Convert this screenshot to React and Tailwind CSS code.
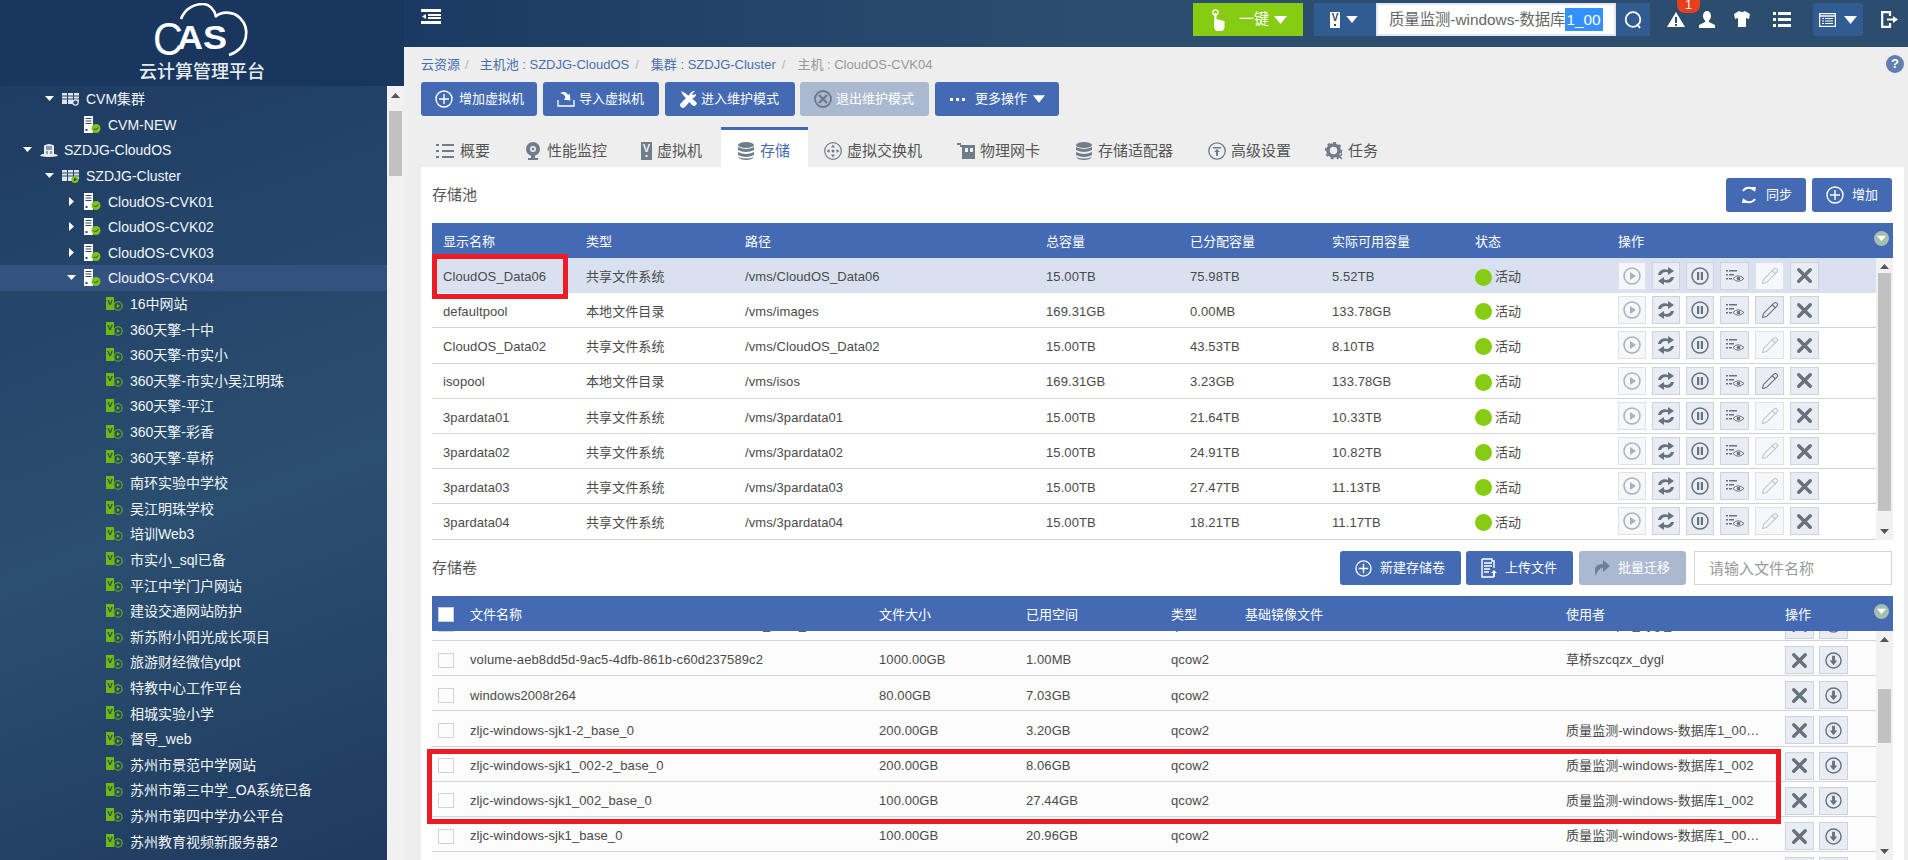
import { X, Pencil } from 'lucide-react';

const POOLS = [
  ['CloudOS_Data06', '共享文件系统', '/vms/CloudOS_Data06', '15.00TB', '75.98TB', '5.52TB', false],
  ['defaultpool', '本地文件目录', '/vms/images', '169.31GB', '0.00MB', '133.78GB', true],
  ['CloudOS_Data02', '共享文件系统', '/vms/CloudOS_Data02', '15.00TB', '43.53TB', '8.10TB', false],
  ['isopool', '本地文件目录', '/vms/isos', '169.31GB', '3.23GB', '133.78GB', true],
  ['3pardata01', '共享文件系统', '/vms/3pardata01', '15.00TB', '21.64TB', '10.33TB', false],
  ['3pardata02', '共享文件系统', '/vms/3pardata02', '15.00TB', '24.91TB', '10.82TB', false],
  ['3pardata03', '共享文件系统', '/vms/3pardata03', '15.00TB', '27.47TB', '11.13TB', false],
  ['3pardata04', '共享文件系统', '/vms/3pardata04', '15.00TB', '18.21TB', '11.17TB', false],
];

const LONG_USER = '质量监测-windows-数据库1_001,质量监测-windows-数据库1_002';
const VOLUMES = [
  ['volume-aeb8dd5d-9ac5-4dfb-861b-c60d237589c2_base_0', '1000.00GB', '1.00MB', 'qcow2', '草桥szcqzx_dygl_base'],
  ['volume-aeb8dd5d-9ac5-4dfb-861b-c60d237589c2', '1000.00GB', '1.00MB', 'qcow2', '草桥szcqzx_dygl'],
  ['windows2008r264', '80.00GB', '7.03GB', 'qcow2', ''],
  ['zljc-windows-sjk1-2_base_0', '200.00GB', '3.20GB', 'qcow2', LONG_USER],
  ['zljc-windows-sjk1_002-2_base_0', '200.00GB', '8.06GB', 'qcow2', '质量监测-windows-数据库1_002'],
  ['zljc-windows-sjk1_002_base_0', '100.00GB', '27.44GB', 'qcow2', '质量监测-windows-数据库1_002'],
  ['zljc-windows-sjk1_base_0', '100.00GB', '20.96GB', 'qcow2', LONG_USER],
  ['zljc-windows-sjk2_base_0', '100.00GB', '18.02GB', 'qcow2', LONG_USER],
];

const VMS = [
  '16中网站', '360天擎-十中', '360天擎-市实小', '360天擎-市实小吴江明珠', '360天擎-平江', '360天擎-彩香',
  '360天擎-草桥', '南环实验中学校', '吴江明珠学校', '培训Web3', '市实小_sql已备', '平江中学门户网站',
  '建设交通网站防护', '新苏附小阳光成长项目', '旅游财经微信ydpt', '特教中心工作平台', '相城实验小学', '督导_web',
  '苏州市景范中学网站', '苏州市第三中学_OA系统已备', '苏州市第四中学办公平台', '苏州教育视频新服务器2',
];

function Caret({ className = 'w-[13px] h-[8px]', color = '#fff' }) {
  return (
    <svg viewBox="0 0 13 8" className={className}>
      <polygon points="0,0 13,0 6.5,8" fill={color} />
    </svg>
  );
}

function TreeArrow({ open }) {
  return (
    <svg viewBox="0 0 9 9" className="w-[9px] h-[9px]">
      {open ? <polygon points="0,2 9,2 4.5,7" fill="#fff" /> : <polygon points="2,0 7,4.5 2,9" fill="#fff" />}
    </svg>
  );
}

function HostIcon() {
  return (
    <svg viewBox="0 0 17 17" className="w-[17px] h-[17px]">
      <path d="M0 0h9v17H0z" fill="#fff" />
      <path d="M1.5 2.5h6M1.5 5h6M1.5 7.5h6" stroke="#2b4a6e" strokeWidth="1" />
      <rect x="1.5" y="13" width="2" height="2" fill="#2b4a6e" />
      <circle cx="12" cy="12.5" r="4.5" fill="#7fc21c" />
      <path d="M10 12.5l1.5 1.5 2.5-2.5" stroke="#234" strokeWidth="1" fill="none" />
    </svg>
  );
}

function ClusterIcon({ badge }) {
  return (
    <svg viewBox="0 0 17 14" className="w-[17px] h-[14px]">
      <path d="M0 1h5v11H0zM6 1h5v11H6zM12 1h5v9h-5z" fill="#dfe5ea" />
      <path d="M0 4h17M0 7h17" stroke="#2b4a6e" strokeWidth="1" />
      {badge === 'play' ? (
        <>
          <circle cx="13" cy="10.5" r="3.5" fill="#7fc21c" />
          <polygon points="12,8.7 15,10.5 12,12.3" fill="#234" />
        </>
      ) : (
        <circle cx="13.5" cy="10.5" r="2.7" fill="#2b4a6e" stroke="#dfe5ea" strokeWidth="1.2" />
      )}
    </svg>
  );
}

function PoolIcon() {
  return (
    <svg viewBox="0 0 18 14" className="w-[18px] h-[14px]">
      <path d="M4 2.5Q9 -0.5 14 2.5V11H4z" fill="#e6ebef" />
      <path d="M6 4h6M6 6h6M7 8v3M11 8v3" stroke="#2b4a6e" strokeWidth="1" />
      <path d="M0 13q1-2 3-2h12q2 0 3 2q-9 2-18 0z" fill="#e6ebef" />
    </svg>
  );
}

function VmIcon() {
  return (
    <svg viewBox="0 0 17 14" className="w-[17px] h-[14px]">
      <rect x="0" y="0" width="8" height="13" fill="#6dbb12" />
      <text x="4" y="7.5" fontSize="8" fontWeight="700" textAnchor="middle" fill="#1f3c5c" fontFamily="Liberation Sans">V</text>
      <circle cx="12" cy="9" r="4.2" fill="#2a4a6c" stroke="#6dbb12" strokeWidth="1.1" />
      <polygon points="10.8,7 14,9 10.8,11" fill="#6dbb12" />
    </svg>
  );
}

function TreeRow({ level, arrow, icon, label, selected }) {
  const indents = ['pl-[23px]', 'pl-[45px]', 'pl-[67px]', 'pl-[89px]'];
  return (
    <div className={`flex h-[25.6px] items-center text-[14px] text-[#f2f5f8] whitespace-nowrap ${indents[level]} ${selected ? 'bg-[#33527f]' : ''}`}>
      <span className="flex w-[17px] shrink-0 items-center">{arrow ? <TreeArrow open={arrow === 'open'} /> : null}</span>
      <span className="flex w-[24px] shrink-0 items-center">{icon}</span>
      <span className="pt-[2px]">{label}</span>
    </div>
  );
}

function Sidebar() {
  return (
    <aside className="flex h-full w-[404px] shrink-0 flex-col">
      <div className="flex h-[86px] shrink-0 flex-col items-center bg-[#19365e]">
        <svg viewBox="0 0 100 56" className="mt-[3px] ml-[2px] h-[56px] w-[100px] shrink-0">
          <path d="M28 16C32 5 42 1 50 1C56 1 61 6 63 13" fill="none" stroke="#fff" strokeWidth="2.6" />
          <path d="M62 14C68 8 80 8 87 15C97 25 96 45 76 52" fill="none" stroke="#fff" strokeWidth="2.6" />
          <text x="0" y="52" fontSize="47" fill="#fff" fontFamily="Liberation Sans" textLength="30" lengthAdjust="spacingAndGlyphs">C</text>
          <text x="24" y="46" fontSize="33" fontWeight="700" fill="#fff" fontFamily="Liberation Sans" textLength="50" lengthAdjust="spacingAndGlyphs">AS</text>
        </svg>
        <div className="mt-[2px] text-[18px] leading-[22px] font-medium text-[#e6ebf0]">云计算管理平台</div>
      </div>
      <div className="flex min-h-0 flex-1">
        <div className="w-[387px] overflow-hidden bg-[linear-gradient(160deg,#1f3c63_0%,#2b4f70_55%,#1f3a5e_100%)]">
          <TreeRow level={1} arrow="open" icon={<ClusterIcon />} label="CVM集群" />
          <TreeRow level={2} icon={<HostIcon />} label="CVM-NEW" />
          <TreeRow level={0} arrow="open" icon={<PoolIcon />} label="SZDJG-CloudOS" />
          <TreeRow level={1} arrow="open" icon={<ClusterIcon badge="play" />} label="SZDJG-Cluster" />
          <TreeRow level={2} arrow="closed" icon={<HostIcon />} label="CloudOS-CVK01" />
          <TreeRow level={2} arrow="closed" icon={<HostIcon />} label="CloudOS-CVK02" />
          <TreeRow level={2} arrow="closed" icon={<HostIcon />} label="CloudOS-CVK03" />
          <TreeRow level={2} arrow="open" icon={<HostIcon />} label="CloudOS-CVK04" selected />
          {VMS.map((name) => (
            <TreeRow key={name} level={3} icon={<VmIcon />} label={name} />
          ))}
        </div>
        <div className="flex w-[17px] flex-col items-center bg-[#f1f1f1]">
          <svg viewBox="0 0 9 5" className="mt-[7px] h-[5px] w-[9px]"><polygon points="0,5 9,5 4.5,0" fill="#555" /></svg>
          <div className="mt-[13px] h-[65px] w-[13px] bg-[#c1c1c1]" />
        </div>
      </div>
    </aside>
  );
}

function TopBar() {
  return (
    <header className="flex h-[47px] shrink-0 items-start bg-[linear-gradient(90deg,#1b3a63_0%,#2c4d6e_45%,#2c4d6e_100%)] text-white">
      <svg viewBox="0 0 20 15" className="mt-[9px] ml-[17px] h-[15px] w-[20px]">
        <path d="M0 0h20v3H0zM7 5h13v2H7zM7 8h13v2H7zM0 12h20v3H0z" fill="#fff" />
        <polygon points="5,5 5,10 1,7.5" fill="#fff" />
      </svg>
      <div className="ml-auto mt-[3px] flex h-[33px] w-[110px] items-center bg-[#86cc12] pl-[19px]">
        <svg viewBox="0 0 13 22" className="h-[22px] w-[13px]">
          <circle cx="3.5" cy="3.5" r="2.7" fill="none" stroke="#fff" strokeWidth="1.2" />
          <path d="M2.5 4h2v6l8 2v6q0 4-4 4H5q-2 0-3-4z" fill="#fff" />
        </svg>
        <span className="ml-[14px] text-[15px]">一键</span>
        <Caret className="ml-[5px] h-[8px] w-[13px]" />
      </div>
      <div className="mt-[3px] ml-[11px] flex h-[33px] w-[336px] bg-[#315c92]">
        <div className="flex w-[62px] items-center pl-[16px]">
          <svg viewBox="0 0 10 16" className="h-[16px] w-[10px]">
            <rect width="10" height="16" fill="#fff" />
            <text x="5" y="9" fontSize="10" fontWeight="700" textAnchor="middle" fill="#2c4d6e" fontFamily="Liberation Sans">V</text>
            <rect x="4" y="12" width="2" height="2" fill="#2c4d6e" />
          </svg>
          <Caret className="ml-[6px] h-[7px] w-[12px]" />
        </div>
        <div className="flex w-[240px] items-center overflow-hidden whitespace-nowrap border-2 border-[#dfe6ef] bg-white pl-[11px] text-[15.35px] text-[#666]">
          <span>质量监测-windows-数据库</span>
          <span className="bg-[#3390ff] pr-[2px] pl-[1px] text-white">1_00</span>
        </div>
        <div className="flex w-[34px] items-center justify-center">
          <svg viewBox="0 0 18 18" className="h-[18px] w-[18px]">
            <circle cx="9" cy="8.5" r="7.3" fill="none" stroke="#fff" strokeWidth="1.8" />
            <path d="M13 13l3 4" stroke="#fff" strokeWidth="1.8" />
          </svg>
        </div>
      </div>
      <div className="relative mt-[12px] ml-[17px]">
        <svg viewBox="0 0 18 15" className="h-[15px] w-[18px]">
          <path d="M9 0l9 15H0z" fill="#fff" />
          <path d="M8 5h2v6H8zM8 12h2v2H8z" fill="#2c4d6e" />
        </svg>
        <span className="absolute -top-[15px] left-[10px] flex h-[16px] w-[23px] items-center justify-center rounded-b-[8px] bg-[#e8401c] text-[12px] leading-none">1</span>
      </div>
      <svg viewBox="0 0 16 17" className="mt-[11px] ml-[14px] h-[17px] w-[16px]">
        <ellipse cx="8" cy="5" rx="4" ry="5" fill="#fff" />
        <path d="M6 9h4v2l6 3v3H0v-3l6-3z" fill="#fff" />
      </svg>
      <svg viewBox="0 0 16 16" className="mt-[11px] ml-[19px] h-[16px] w-[16px]">
        <path d="M5 0q3 2 6 0l5 3-1 5-3-1v9H4V7L1 8 0 3z" fill="#fff" />
      </svg>
      <svg viewBox="0 0 18 15" className="mt-[12px] ml-[23px] h-[15px] w-[18px]">
        <path d="M0 0h3v3H0zM5 0h13v3H5zM0 6h3v3H0zM5 6h13v3H5zM0 12h3v3H0zM5 12h13v3H5z" fill="#fff" />
      </svg>
      <div className="mt-[3px] ml-[22px] flex h-[33px] w-[50px] items-center rounded-[3px] bg-[#315c92] pl-[6px]">
        <svg viewBox="0 0 17 14" className="h-[14px] w-[17px]">
          <rect x="0.6" y="0.6" width="15.8" height="12.8" fill="none" stroke="#fff" strokeWidth="1.2" />
          <path d="M1 3h15" stroke="#fff" strokeWidth="1.5" />
          <path d="M3 5.5h2M6 5.5h8M3 8h2M6 8h8M3 10.5h2M6 10.5h8" stroke="#fff" strokeWidth="1" />
        </svg>
        <Caret className="ml-[8px] h-[8px] w-[13px]" />
      </div>
      <svg viewBox="0 0 17 17" className="mt-[11px] ml-[18px] h-[17px] w-[17px]">
        <path d="M9 5V1.2H1.2v14.6H9V12" fill="none" stroke="#fff" strokeWidth="2.2" />
        <path d="M6 7.5h6V5l5 3.5-5 3.5V9.5H6z" fill="#fff" />
      </svg>
      <div className="w-[10px]" />
    </header>
  );
}

function PlusCircle({ size = 'h-[17px] w-[17px]' }) {
  return (
    <svg viewBox="0 0 18 18" className={size}>
      <circle cx="9" cy="9" r="8" fill="none" stroke="#fff" strokeWidth="1.4" />
      <path d="M9 4v10M4 9h10" stroke="#fff" strokeWidth="1.4" />
    </svg>
  );
}

function ActionButton({ width, pad, gap, icon, label, disabled }) {
  return (
    <div className={`flex h-[34px] shrink-0 items-center rounded-[3px] text-[13px] text-white whitespace-nowrap ${disabled ? 'bg-[#aab8d0]' : 'bg-[#436ab3]'} ${width} ${pad}`}>
      <span className={`flex shrink-0 items-center ${gap}`}>{icon}</span>
      <span>{label}</span>
    </div>
  );
}

function TabIcon({ name }) {
  const c = '#6f7c8a';
  if (name === 'list') {
    return (
      <svg viewBox="0 0 18 14" className="h-[14px] w-[18px]">
        <path d="M0 0h3v2H0zM6 0h12v2H6zM0 6h3v2H0zM6 6h12v2H6zM0 12h3v2H0zM6 12h12v2H6z" fill={c} />
      </svg>
    );
  }
  if (name === 'cam') {
    return (
      <svg viewBox="0 0 16 18" className="h-[18px] w-[16px]">
        <circle cx="8" cy="7" r="7" fill={c} />
        <circle cx="8" cy="7" r="3" fill="#eee" />
        <circle cx="8" cy="7" r="1.3" fill={c} />
        <path d="M3 16h10v2H3zM6 13h4v3H6z" fill={c} />
      </svg>
    );
  }
  if (name === 'v') {
    return (
      <svg viewBox="0 0 11 18" className="h-[18px] w-[11px]">
        <rect width="11" height="18" fill={c} />
        <text x="5.5" y="10" fontSize="11" fontWeight="700" textAnchor="middle" fill="#eee" fontFamily="Liberation Sans">V</text>
        <rect x="4.5" y="13" width="2" height="2" fill="#eee" />
      </svg>
    );
  }
  if (name === 'db') {
    return (
      <svg viewBox="0 0 16 18" className="h-[18px] w-[16px]">
        <ellipse cx="8" cy="3" rx="8" ry="3" fill={c} />
        <path d="M0 5q8 4 16 0v3q-8 4-16 0zM0 10q8 4 16 0v3q-8 4-16 0zM0 15q8 3 16 0q-2 3-8 3t-8-3z" fill={c} />
      </svg>
    );
  }
  if (name === 'switch') {
    return (
      <svg viewBox="0 0 18 18" className="h-[18px] w-[18px]">
        <circle cx="9" cy="9" r="8.3" fill="none" stroke={c} strokeWidth="1.2" />
        <path d="M9 2.5l2 3H7zM9 15.5l2-3H7zM2.5 9l3-2v4zM15.5 9l-3-2v4z" fill={c} />
        <circle cx="9" cy="9" r="1.5" fill={c} />
      </svg>
    );
  }
  if (name === 'nic') {
    return (
      <svg viewBox="0 0 18 16" className="h-[16px] w-[18px]">
        <path d="M0 0h4v2h14v14H5V4H3V2H0z" fill={c} />
        <path d="M8 5h3v4H8zM13 5h3v4h-3z" fill="#eee" />
      </svg>
    );
  }
  if (name === 'adv') {
    return (
      <svg viewBox="0 0 18 18" className="h-[18px] w-[18px]">
        <circle cx="9" cy="9" r="8.2" fill="none" stroke={c} strokeWidth="1.3" />
        <path d="M5 5h8v1.5H5zM9 7l3 3h-2v4H8v-4H6z" fill={c} />
      </svg>
    );
  }
  return (
    <svg viewBox="0 0 18 18" className="h-[18px] w-[18px]">
      <circle cx="8.5" cy="8.5" r="5.5" fill="none" stroke={c} strokeWidth="3.5" />
      <circle cx="8.5" cy="8.5" r="7.8" fill="none" stroke={c} strokeWidth="1.8" strokeDasharray="3 3" />
      <path d="M12 12l5 5M17 12l-5 5" stroke={c} strokeWidth="1.6" />
    </svg>
  );
}

const TABS = [
  { key: 'list', label: '概要', width: 'w-[87px]', pad: 'pl-[15px]', gap: 'mr-[6px]' },
  { key: 'cam', label: '性能监控', width: 'w-[116px]', pad: 'pl-[17px]', gap: 'mr-[6px]' },
  { key: 'v', label: '虚拟机', width: 'w-[97px]', pad: 'pl-[17px]', gap: 'mr-[5px]' },
  { key: 'db', label: '存储', width: 'w-[87px]', pad: 'pl-[17px]', gap: 'mr-[6px]', active: true },
  { key: 'switch', label: '虚拟交换机', width: 'w-[132px]', pad: 'pl-[16px]', gap: 'mr-[5px]' },
  { key: 'nic', label: '物理网卡', width: 'w-[119px]', pad: 'pl-[17px]', gap: 'mr-[5px]' },
  { key: 'db', label: '存储适配器', width: 'w-[132px]', pad: 'pl-[17px]', gap: 'mr-[6px]' },
  { key: 'adv', label: '高级设置', width: 'w-[117px]', pad: 'pl-[17px]', gap: 'mr-[5px]' },
  { key: 'gear', label: '任务', width: 'w-[87px]', pad: 'pl-[17px]', gap: 'mr-[5px]' },
];

function Tabs() {
  return (
    <div className="mt-[11px] flex h-[40px] shrink-0">
      {TABS.map((tab) => (
        <div
          key={tab.label}
          className={`flex items-center border-t-[3px] pt-[5px] text-[15px] whitespace-nowrap ${tab.width} ${tab.pad} ${tab.active ? 'border-[#436ab3] bg-white text-[#436ab3]' : 'border-transparent text-[#555]'}`}
        >
          <span className={`flex items-center ${tab.gap}`}><TabIcon name={tab.key} /></span>
          {tab.label}
        </div>
      ))}
    </div>
  );
}

function IconBtn({ faded, wide, children }) {
  return (
    <span className={`flex h-[28px] shrink-0 items-center justify-center border ${wide ? 'w-[29px]' : 'w-[28px]'} ${faded ? 'border-[#dde2e8] bg-[#f5f7fa]' : 'border-[#cbd3dc] bg-[#e9edf3]'}`}>
      {children}
    </span>
  );
}

const GLYPH = '#67727f';

function PlayGlyph() {
  return (
    <svg viewBox="0 0 18 18" className="h-[18px] w-[18px]">
      <circle cx="9" cy="9" r="8" fill="none" stroke="#a9b1ba" strokeWidth="1.5" />
      <polygon points="7,5 13,9 7,13" fill="#a9b1ba" />
    </svg>
  );
}

function SyncGlyph() {
  return (
    <svg viewBox="0 0 16 18" className="h-[18px] w-[16px]">
      <path d="M0 8C1 3 6 1 10 3V0l6 4-6 4V5.5C7 4.5 4 5.5 3 8z" fill={GLYPH} />
      <path d="M16 10C15 15 10 17 6 15v3l-6-4 6-4v2.5c3 1 6 0 7-2.5z" fill={GLYPH} />
    </svg>
  );
}

function PauseGlyph() {
  return (
    <svg viewBox="0 0 18 18" className="h-[18px] w-[18px]">
      <circle cx="9" cy="9" r="8" fill="none" stroke={GLYPH} strokeWidth="1.5" />
      <path d="M6 5h2.2v8H6zM9.8 5H12v8H9.8z" fill={GLYPH} />
    </svg>
  );
}

function ListEyeGlyph() {
  return (
    <svg viewBox="0 0 18 14" className="h-[14px] w-[18px]">
      <path d="M0 1h2v1.5H0zM3 1h8v1.5H3zM0 5h2v1.5H0zM3 5h5v1.5H3zM0 9h2v1.5H0zM3 9h3v1.5H3z" fill={GLYPH} />
      <path d="M7 9.5q5-5.5 11 0q-6 5.5-11 0z" fill="#e9edf3" stroke={GLYPH} strokeWidth="1" />
      <circle cx="12.5" cy="9.5" r="1.8" fill={GLYPH} />
    </svg>
  );
}

function DownGlyph() {
  return (
    <svg viewBox="0 0 18 18" className="h-[17px] w-[17px]">
      <circle cx="9" cy="9" r="8" fill="none" stroke={GLYPH} strokeWidth="1.5" />
      <path d="M7.5 4h3v5h2.5L9 14 5 9h2.5z" fill={GLYPH} />
    </svg>
  );
}

function SortBadge() {
  return (
    <span className="absolute top-[8px] right-[4px] flex h-[15px] w-[15px] items-center justify-center rounded-full bg-[#a4bfb0]">
      <Caret className="h-[7px] w-[9px]" />
    </span>
  );
}

function ScrollTrack({ thumb }) {
  return (
    <div className="flex w-[17px] shrink-0 flex-col items-center bg-[#f1f1f1]">
      <svg viewBox="0 0 9 5" className="mt-[6px] h-[5px] w-[9px] shrink-0"><polygon points="0,5 9,5 4.5,0" fill="#555" /></svg>
      <div className={`w-[13px] shrink-0 bg-[#c1c1c1] ${thumb}`} />
      <svg viewBox="0 0 9 5" className="mt-auto mb-[6px] h-[5px] w-[9px] shrink-0"><polygon points="0,0 9,0 4.5,5" fill="#555" /></svg>
    </div>
  );
}

function PoolTable() {
  const cols = ['w-[143px]', 'w-[159px]', 'w-[301px]', 'w-[144px]', 'w-[142px]', 'w-[143px]', 'w-[143px]'];
  const heads = ['显示名称', '类型', '路径', '总容量', '已分配容量', '实际可用容量', '状态'];
  return (
    <div className="shrink-0">
      <div className="relative flex h-[35px] items-center bg-[#436ab3] pt-[2px] text-[13px] text-white">
        {heads.map((h, i) => (
          <div key={h} className={`pl-[11px] ${cols[i]}`}>{h}</div>
        ))}
        <div className="pl-[11px]">操作</div>
        <SortBadge />
      </div>
      <div className="flex h-[282px] overflow-hidden">
        <div className="w-[1444px] shrink-0 text-[13px] tracking-[0.09px] text-[#4a4a4a]">
          {POOLS.map((row, r) => (
            <div key={row[0]} className={`flex h-[35.2px] items-center pt-[3px] ${r === 0 ? 'bg-[#d9e0ef]' : 'border-b border-[#d4d4d4] bg-white'}`}>
              {row.slice(0, 6).map((cell, i) => (
                <div key={i} className={`pl-[11px] ${cols[i]}`}>{cell}</div>
              ))}
              <div className={`flex items-center pl-[11px] ${cols[6]}`}>
                <span className="mr-[3px] h-[17px] w-[17px] rounded-full bg-[#86cc12]" />
                活动
              </div>
              <div className="-mt-[3px] flex gap-[6px] pl-[11px]">
                <IconBtn faded><PlayGlyph /></IconBtn>
                <IconBtn><SyncGlyph /></IconBtn>
                <IconBtn><PauseGlyph /></IconBtn>
                <IconBtn wide><ListEyeGlyph /></IconBtn>
                <IconBtn wide faded={!row[6]}>
                  <Pencil size={18} strokeWidth={1.5} color={row[6] ? GLYPH : '#c0c6cd'} />
                </IconBtn>
                <IconBtn wide><X size={23} strokeWidth={3.6} color={GLYPH} /></IconBtn>
              </div>
            </div>
          ))}
        </div>
        <ScrollTrack thumb="mt-[4px] h-[238px]" />
      </div>
    </div>
  );
}

function Checkbox({ white }) {
  return <span className={`h-[15px] w-[16px] shrink-0 border ${white ? 'border-[#c9d0da] bg-white' : 'border-[#d0d4d9] bg-[#fcfcfc]'}`} />;
}

function VolumeTable() {
  return (
    <div className="min-h-0 flex-1">
      <div className="relative flex h-[35px] items-center bg-[#436ab3] pt-[2px] pl-[6px] text-[13px] text-white">
        <Checkbox white />
        <div className="w-[425px] pl-[16px]">文件名称</div>
        <div className="w-[147px]">文件大小</div>
        <div className="w-[145px]">已用空间</div>
        <div className="w-[74px]">类型</div>
        <div className="w-[321px]">基础镜像文件</div>
        <div className="w-[219px]">使用者</div>
        <div>操作</div>
        <SortBadge />
      </div>
      <div className="flex h-[229px] overflow-hidden">
        <div className="w-[1444px] shrink-0 overflow-hidden text-[13px] tracking-[0.09px] text-[#4a4a4a]">
          <div className="-mt-[25.2px]">
            {VOLUMES.map((row, r) => (
              <div key={r} className="flex h-[35.2px] items-center border-b border-[#d4d4d4] bg-[#fcfcfc] pt-[4px] pl-[6px]">
                <Checkbox />
                <div className="w-[425px] whitespace-nowrap pl-[16px]">{row[0]}</div>
                <div className="w-[147px]">{row[1]}</div>
                <div className="w-[145px]">{row[2]}</div>
                <div className="w-[395px]">{row[3]}</div>
                <div className="w-[219px]"><div className="w-[196px] truncate">{row[4]}</div></div>
                <div className="flex gap-[5px]">
                  <IconBtn wide><X size={23} strokeWidth={3.6} color={GLYPH} /></IconBtn>
                  <IconBtn wide><DownGlyph /></IconBtn>
                </div>
              </div>
            ))}
          </div>
        </div>
        <ScrollTrack thumb="mt-[47px] h-[54px]" />
      </div>
    </div>
  );
}

function Content() {
  return (
    <main className="flex min-h-0 flex-1 flex-col bg-[#eeeeee] pl-[17px] pr-[4px]">
      <div className="relative flex h-[35px] shrink-0 items-center text-[13px] text-[#4a6fae] whitespace-nowrap">
        <span>云资源</span>
        <span className="mx-[5px] text-[#b5b5b5]">/</span>
        <span className="ml-[6px]">主机池 : SZDJG-CloudOS</span>
        <span className="mx-[6px] text-[#b5b5b5]">/</span>
        <span className="ml-[6px]">集群 : SZDJG-Cluster</span>
        <span className="mx-[6px] text-[#b5b5b5]">/</span>
        <span className="ml-[6px] text-[#999]">主机 : CloudOS-CVK04</span>
        <span className="absolute top-[8px] right-[0px] flex h-[18px] w-[18px] items-center justify-center rounded-full bg-[#5f7fb0] text-[13px] font-bold text-white">?</span>
      </div>
      <div className="flex shrink-0 gap-[6px]">
        <ActionButton width="w-[116px]" pad="pl-[14px]" gap="mr-[6px]" icon={<PlusCircle size="h-[18px] w-[18px]" />} label="增加虚拟机" />
        <ActionButton
          width="w-[116px]"
          pad="pl-[14px]"
          gap="mr-[4px]"
          icon={
            <svg viewBox="0 0 18 18" className="h-[18px] w-[18px]">
              <path d="M1 10v6h16v-6" fill="none" stroke="#fff" strokeWidth="1.3" />
              <path d="M3 3q6-3 8 2l1.5-1.5 1 7-7-1 2-1.5Q8 4 3 3z" fill="#fff" />
            </svg>
          }
          label="导入虚拟机"
        />
        <ActionButton
          width="w-[130px]"
          pad="pl-[14px]"
          gap="mr-[4px]"
          icon={
            <svg viewBox="0 0 18 18" className="h-[18px] w-[18px]">
              <path d="M2 1l2 4 9 10q2 2 4 0t-1-4L6 3z" fill="#fff" />
              <path d="M16 1q-4 0-5 3l-9 9q-2 2 0 4t4 0l8-9q3-1 3-4l-3 1-1-1z" fill="#fff" />
            </svg>
          }
          label="进入维护模式"
        />
        <div className="-ml-[1px]">
          <ActionButton
            width="w-[129px]"
            pad="pl-[14px]"
            gap="mr-[4px]"
            disabled
            icon={
              <svg viewBox="0 0 18 18" className="h-[18px] w-[18px]">
                <circle cx="9" cy="9" r="8" fill="none" stroke="#6b7787" strokeWidth="1.8" />
                <path d="M5 5l8 8M13 5l-8 8" stroke="#6b7787" strokeWidth="2.2" />
              </svg>
            }
            label="退出维护模式"
          />
        </div>
        <ActionButton
          width="w-[124px]"
          pad="pl-[15px]"
          gap="mr-[10px]"
          icon={
            <svg viewBox="0 0 15 3" className="h-[3px] w-[15px]">
              <path d="M0 0h3v3H0zM6 0h3v3H6zM12 0h3v3h-3z" fill="#fff" />
            </svg>
          }
          label={
            <span className="flex items-center">
              更多操作
              <Caret className="ml-[6px] h-[8px] w-[12px]" />
            </span>
          }
        />
      </div>
      <Tabs />
      <section className="flex min-h-0 flex-1 flex-col bg-white px-[11px]">
        <div className="flex h-[45px] shrink-0 items-center justify-between pt-[11px] pr-[1px]">
          <span className="text-[15px] text-[#555]">存储池</span>
          <div className="flex gap-[6px]">
            <ActionButton
              width="w-[80px]"
              pad="pl-[15px]"
              gap="mr-[9px]"
              icon={
                <svg viewBox="0 0 16 18" className="h-[18px] w-[16px]">
                  <path d="M2 5A7 7 0 0 1 13 4M14 13A7 7 0 0 1 3 14" fill="none" stroke="#fff" strokeWidth="2" />
                  <path d="M10 1l5 0 -1 5zM6 17l-5 0 1-5z" fill="#fff" />
                </svg>
              }
              label="同步"
            />
            <ActionButton width="w-[80px]" pad="pl-[14px]" gap="mr-[8px]" icon={<PlusCircle size="h-[18px] w-[18px]" />} label="增加" />
          </div>
        </div>
        <div className="h-[11px] shrink-0" />
        <PoolTable />
        <div className="flex h-[45px] shrink-0 items-center justify-between pt-[11px] pr-[1px]">
          <span className="text-[15px] text-[#555]">存储卷</span>
          <div className="flex">
            <ActionButton width="w-[121px]" pad="pl-[15px]" gap="mr-[8px]" icon={<PlusCircle />} label="新建存储卷" />
            <div className="ml-[5px]">
              <ActionButton
                width="w-[107px]"
                pad="pl-[15px]"
                gap="mr-[8px]"
                icon={
                  <svg viewBox="0 0 16 20" className="h-[20px] w-[16px]">
                    <path d="M1 1h10v2h2v7M13 19H1V1" fill="none" stroke="#fff" strokeWidth="1.4" />
                    <path d="M3 5h8M3 8h8M3 11h6M3 14h5" stroke="#fff" strokeWidth="1.3" />
                    <path d="M13 12l3 3h-2v4h-2v-4h-2z" fill="#fff" />
                  </svg>
                }
                label="上传文件"
              />
            </div>
            <div className="ml-[6px]">
              <ActionButton
                width="w-[107px]"
                pad="pl-[15px]"
                gap="mr-[8px]"
                disabled
                icon={
                  <svg viewBox="0 0 16 18" className="h-[18px] w-[16px]">
                    <path d="M9 1l7 6-7 6V9Q4 9 2 17Q-2 5 9 5z" fill="#6f7f95" />
                  </svg>
                }
                label="批量迁移"
              />
            </div>
            <input
              readOnly
              placeholder="请输入文件名称"
              className="ml-[8px] h-[34px] w-[198px] border border-[#cfd5e2] bg-white pl-[14px] text-[15px] outline-none placeholder:text-[#999]"
            />
          </div>
        </div>
        <div className="h-[11px] shrink-0" />
        <VolumeTable />
      </section>
    </main>
  );
}

export default function App() {
  return (
    <div className="relative flex h-[860px] w-[1908px] overflow-hidden bg-[#eeeeee] font-['Liberation_Sans','Noto_Sans_CJK_SC',sans-serif]">
      <Sidebar />
      <div className="flex min-w-0 flex-1 flex-col">
        <TopBar />
        <Content />
      </div>
      {/* red marks drawn over the screenshot */}
      <div className="pointer-events-none absolute top-[254px] left-[432px] h-[45px] w-[136px] border-[5px] border-[#ed1c24]" />
      <div className="pointer-events-none absolute top-[749px] left-[427px] h-[75px] w-[1354px] border-[5px] border-[#ed1c24]" />
    </div>
  );
}
